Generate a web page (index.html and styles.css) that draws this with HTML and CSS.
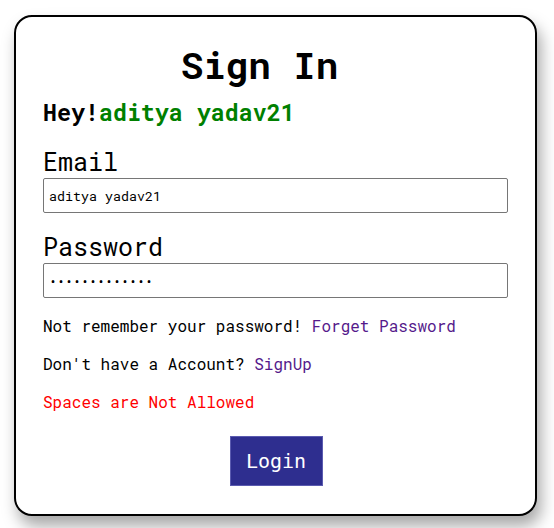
FILE: index.html
```html
<!DOCTYPE html>
<html>
<head>
<meta charset="utf-8">
<link rel="stylesheet" href="styles.css">
</head>
<body>
<div class="card">
  <h1 class="title">Sign In</h1>
  <h2 class="greet">Hey!<span class="name">aditya yadav21</span></h2>
  <label class="label label-first">Email</label>
  <input class="field" type="text" value="aditya yadav21">
  <label class="label">Password</label>
  <input class="field" type="password" value="aditya yadav2">
  <p class="line line-first">Not remember your password! <a class="link" href="#">Forget Password</a></p>
  <p class="line">Don't have a Account? <a class="link" href="#">SignUp</a></p>
  <p class="line error">Spaces are Not Allowed</p>
  <div class="actions"><button class="btn">Login</button></div>
</div>
</body>
</html>
```
FILE: styles.css
```css
html, body {
  margin: 0;
  padding: 0;
  background: #ffffff;
}
body {
  font-family: "Roboto Mono", "Liberation Mono", "DejaVu Sans Mono", monospace;
  color: #000;
  padding-bottom: 12px;
}
.card {
  box-sizing: border-box;
  width: 523px;
  margin: 15px 0 0 14px;
  border: 2px solid #000;
  border-radius: 18px;
  padding: 26px 27px 28px 27px;
  display: flex;
  flex-direction: column;
  box-shadow: 4px 10px 16px rgba(0, 0, 0, 0.35);
  background: #fff;
}
.title {
  margin: 0;
  font-size: 37.5px;
  line-height: 44px;
  font-weight: bold;
  text-align: center;
  padding-right: 32px;
}
.greet {
  margin: 11px 0 0 0;
  font-size: 23.3px;
  line-height: 28px;
  font-weight: bold;
}
.name {
  color: #008000;
}
.label {
  display: block;
  font-size: 25px;
  line-height: 32px;
  margin-top: 18px;
}
.label-first {
  margin-top: 20px;
}
.field {
  box-sizing: border-box;
  width: 100%;
  height: 35px;
  margin: 0;
  border: 1px solid #767676;
  border-radius: 2px;
  padding: 1px 5px;
  font-family: "Roboto Mono", "Liberation Mono", "DejaVu Sans Mono", monospace;
  font-size: 13.33px;
  color: #000;
}
.line {
  margin: 18px 0 0 0;
  font-size: 16px;
  line-height: 20px;
}
.line-first {
  margin-top: 18px;
}
.link {
  color: #551a8b;
  text-decoration: none;
}
.error {
  color: #ff0000;
}
.actions {
  display: flex;
  justify-content: center;
  margin-top: 24px;
  padding-left: 1px;
}
.btn {
  box-sizing: border-box;
  width: 93px;
  height: 50px;
  background: #2e2e8f;
  color: #fff;
  border: 1px solid #5b5bb0;
  font-family: "DejaVu Sans Mono", monospace;
  font-size: 20px;
  padding: 0;
}
```
